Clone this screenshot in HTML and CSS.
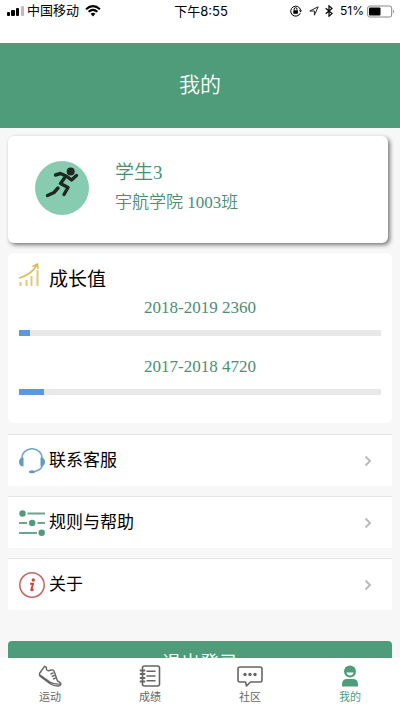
FILE: index.html
```html
<!DOCTYPE html>
<html lang="zh-CN">
<head>
<meta charset="utf-8">
<meta name="viewport" content="width=device-width, initial-scale=1">
<title>我的</title>
<link rel="stylesheet" href="styles.css">
</head>
<body>
<div class="status">
  <div class="status-side">
    <svg class="signal" width="17" height="10" viewBox="0 0 17 10"><rect x="0" y="6" width="3" height="4" rx="1"/><rect x="4" y="4" width="4" height="6" rx="1"/><rect x="9" y="2" width="3" height="8" rx="1"/><rect x="14" y="0" width="3" height="10" rx="1" fill="#bbb"/></svg>
    <span class="carrier">中国移动</span>
    <svg class="wifi" width="16" height="12" viewBox="0 0 16 12"><path d="M1 4.2Q8-2 15 4.2M3.6 6.8Q8 3 12.4 6.8" fill="none" stroke="#000" stroke-width="2"/><path d="M5.6 8.8Q8 6.7 10.4 8.8L8 11.5Z"/></svg>
  </div>
  <span class="time">下午8:55</span>
  <div class="status-side status-right">
    <svg width="12" height="12" viewBox="0 0 12 12"><path d="M10.3 8.2A5 5 0 1 1 10.6 5" fill="none" stroke="#000"/><path d="M9 5.2h3L10.5 7.6Z"/><rect x="3.3" y="5.2" width="4.6" height="3.6" rx=".4"/><path d="M4.2 5.3V4.1a1.4 1.4 0 0 1 2.8 0v1.2" fill="none" stroke="#000"/></svg>
    <svg class="arrow" width="10" height="10" viewBox="0 0 10 10"><path d="M.8 5 9.2.8 5.4 9.2V5Z" fill="none" stroke="#222"/></svg>
    <svg class="bluetooth" width="8" height="12" viewBox="0 0 8 12"><path d="M.7 3.2 7 8.6 4 11.2V.8L7 3.4.7 8.8" fill="none" stroke="#000" stroke-width="1.2"/></svg>
    <span class="percent">51%</span>
    <svg width="28" height="13" viewBox="0 0 28 13"><rect x=".7" y="1" width="24" height="11" rx="2" fill="#fff" stroke="#888"/><rect x="2" y="2.5" width="11.5" height="8" rx="1"/><path d="M26 4.5q2 2 0 4Z" fill="#888"/></svg>
  </div>
</div>
<header class="header"><h1>我的</h1></header>
<main class="content">
  <section class="profile">
    <svg class="avatar" width="54" height="54" viewBox="0 0 54 54"><circle cx="27" cy="27" r="27" fill="#87ccb0"/><circle cx="35.700" cy="10.500" r="4" fill="#202824"/><path d="M20.500 14 25.500 12.500 31 15 25.500 22.500 33 26.500 29 33.500M23 27 19 31.500 12.500 34.500M32 15.500l4.500 3.500 5-4.500" fill="none" stroke="#202824" stroke-width="3.400" stroke-linecap="round" stroke-linejoin="round"/></svg>
    <div class="person">
      <div class="name">学生3</div>
      <div class="class-name">宇航学院 1003班</div>
    </div>
  </section>
  <section class="growth">
    <div class="growth-title">
      <svg width="20" height="24" viewBox="0 0 20 24"><path d="M1.500 23v-4M7.500 23v-6M12.500 23V13M18.500 23V7" fill="none" stroke="#e3c878" stroke-width="2"/><path d="M0 15Q12 12 18 2M13.500 3.500 18.500 1l.500 5" fill="none" stroke="#dfb951" stroke-width="1.500"/></svg>
      <h2>成长值</h2>
    </div>
    <div class="year">
      <div class="year-label" id="y1">2018-2019 2360</div>
      <div class="track" role="progressbar" aria-labelledby="y1" aria-valuenow="3"><div class="fill" style="width:3%"></div></div>
    </div>
    <div class="year">
      <div class="year-label" id="y2">2017-2018 4720</div>
      <div class="track" role="progressbar" aria-labelledby="y2" aria-valuenow="7"><div class="fill" style="width:7%"></div></div>
    </div>
  </section>
  <nav class="links">
    <a class="row" href="#service">
      <svg width="26" height="26" viewBox="0 0 26 26"><path d="M3 11V10a10 9.300 0 0 1 20 0v1M23.500 17q-1 5-8 6.500" fill="none" stroke="#73a9c8" stroke-width="1.500"/><path d="M4.500 9.500v9C1.500 18.500 0 16.500 0 14s1.500-4.500 4.500-4.500ZM21.500 9.500v9c3 0 4.500-2 4.500-4.500s-1.500-4.500-4.500-4.500Z" fill="#5f9cc2"/><ellipse cx="13" cy="23.700" rx="3" ry="1.500" fill="#5f9cc2"/></svg>
      <span>联系客服</span>
      <svg class="chevron" width="8" height="12" viewBox="0 0 8 12"><path d="m1.500 1.500 4.500 4.500-4.500 4.500" /></svg>
    </a>
    <a class="row" href="#help">
      <svg width="26" height="26" viewBox="0 0 26 26"><path d="M8.500 3.500H26M0 13h8M18.500 13H26M0 23h18" stroke="#69a98b" stroke-width="2"/><circle cx="3.500" cy="3.500" r="3.200" fill="#529b79"/><circle cx="13.200" cy="13" r="3.200" fill="#529b79"/><circle cx="22.700" cy="22.700" r="3.200" fill="#529b79"/></svg>
      <span>规则与帮助</span>
      <svg class="chevron" width="8" height="12" viewBox="0 0 8 12"><path d="m1.500 1.500 4.500 4.500-4.500 4.500" /></svg>
    </a>
    <a class="row" href="#about">
      <svg width="26" height="26" viewBox="0 0 26 26"><circle cx="13" cy="13" r="12.200" fill="none" stroke="#c9635f" stroke-width="1.500"/><circle cx="14.300" cy="8" r="1.700" fill="#cf4540"/><path d="M11 11.700h3L12.300 18q0 .800 2.200-.600" fill="none" stroke="#cf4540" stroke-width="2"/></svg>
      <span>关于</span>
      <svg class="chevron" width="8" height="12" viewBox="0 0 8 12"><path d="m1.500 1.500 4.500 4.500-4.500 4.500" /></svg>
    </a>
  </nav>
  <button class="logout" type="button">退出登录</button>
</main>
<nav class="tabs">
  <a class="tab" href="#sport">
    <svg width="24" height="22" viewBox="0 0 24 22"><path d="M6.500 1.300 1.500 8.500Q1 10.500 3 12l9.500 7q3.500 2.200 8 2 2.800-.5 2.300-2.500-.3-1.300-3.300-2.500L16 6Q15.500 4.500 13.500 5l-3 .8Q7.500 5 8.500 2.300ZM2 10l11 7.700q3.500 1.800 9.500 1.300M12.500 9l3-1.200M13.700 11.500l3-1.200M15 14l3-1.200" fill="none" stroke="#666" stroke-width="1.400" stroke-linejoin="round"/></svg>
    <span>运动</span>
  </a>
  <a class="tab" href="#score">
    <svg width="24" height="22" viewBox="0 0 24 22"><rect x="4.500" y="1" width="17" height="20" rx="2" fill="none" stroke="#666" stroke-width="1.600"/><path d="M8.500 6.200h9M8.500 11h9M8.500 15.800h9" stroke="#666" stroke-width="1.400"/><path d="M2.500 5.500h4M2.500 9h4M2.500 13h4M2.500 16.500h4" stroke="#666" stroke-width="1.800" stroke-linecap="round"/></svg>
    <span>成绩</span>
  </a>
  <a class="tab" href="#community">
    <svg width="26" height="22" viewBox="0 0 26 22"><path d="M3 2h20q2 0 2 2v11q0 2-2 2H13.500l-4 4-1-4H3q-2 0-2-2V4q0-2 2-2Z" fill="none" stroke="#666" stroke-width="1.600" stroke-linejoin="round"/><g fill="#666"><circle cx="8" cy="9.500" r="1.700"/><circle cx="13" cy="9.500" r="1.700"/><circle cx="18" cy="9.500" r="1.700"/></g></svg>
    <span>社区</span>
  </a>
  <a class="tab active" href="#me" aria-current="page">
    <svg width="24" height="22" viewBox="0 0 24 22"><circle cx="12" cy="6.500" r="6" fill="#4f9c7a"/><path d="M8.500 7.500h7q-.5 3-3.500 3t-3.500-3Z" fill="#fff"/><path d="M4 21.500v-2Q4 14 9 14h6q5 0 5 5.500v2Z" fill="#4f9c7a"/></svg>
    <span>我的</span>
  </a>
</nav>
</body>
</html>
```
FILE: styles.css
```css
* {
  box-sizing: border-box;
}

body {
  margin: 0;
  height: 100vh;
  display: flex;
  flex-direction: column;
  background: #f7f7f7;
  color: #000;
  font-family: "Liberation Sans", "Noto Sans CJK SC", sans-serif;
}

svg {
  display: block;
  flex: none;
}

a {
  color: inherit;
  text-decoration: none;
}

h1,
h2 {
  margin: 0;
  font-weight: 400;
}

.status {
  flex: none;
  display: flex;
  justify-content: space-between;
  padding: 0 5px 21px 7px;
  background: #fff;
  font-size: 13px;
  line-height: 22px;
}

.status-side {
  flex: 1;
  display: flex;
  align-items: center;
}

.status-right {
  justify-content: flex-end;
}

.carrier {
  margin: 0 6px 0 3px;
}

.time {
  font-family: Inter, "Noto Sans CJK SC", sans-serif;
}

.arrow {
  margin-left: 7px;
}

.bluetooth {
  margin: 0 7px 0 6px;
}

.percent {
  margin-right: 3px;
  font-family: Inter, sans-serif;
  font-size: 12px;
}

.header {
  flex: none;
  padding: 24px 0 25px;
  background: #4f9c7a;
  color: #fff;
  text-align: center;
}

.header h1 {
  font-size: 21px;
  font-weight: 350;
  line-height: 36px;
}

.content {
  flex: 1;
  min-height: 0;
  overflow-y: auto;
  scrollbar-width: none;
  padding: 8px;
}

.profile {
  display: flex;
  align-items: center;
  gap: 26px;
  margin-right: 4px;
  padding: 22px 27px 25px;
  border-radius: 6px;
  background: #fff;
  box-shadow: 2px 2px 4px #777;
  color: #4b8f73;
  font-family: "Liberation Serif", "Noto Sans CJK SC", serif;
  font-weight: 350;
}

.name {
  font-size: 19px;
  line-height: 30px;
}

.class-name {
  font-size: 17px;
  line-height: 30px;
}

.growth {
  margin-top: 10px;
  padding: 10px 11px 28px;
  border-radius: 6px;
  background: #fff;
}

.growth-title {
  display: flex;
  gap: 10px;
}

.growth h2 {
  font-size: 19px;
  line-height: 34px;
}

.year + .year {
  margin-top: 20px;
}

.year-label {
  padding-bottom: 11px;
  color: #4b8f73;
  font-family: "Liberation Serif", serif;
  font-size: 17px;
  line-height: 22px;
  text-align: center;
}

.track {
  height: 6px;
  background: #e8e8e8;
}

.fill {
  height: 100%;
  background: #5899e0;
}

.links {
  display: grid;
  gap: 10px;
  margin-top: 11px;
}

.row {
  display: flex;
  align-items: center;
  gap: 4px;
  padding: 12px 20px 12px 11px;
  border-top: 1px solid #e4e4e4;
  background: #fff;
  font-size: 17px;
  line-height: 27px;
}

.chevron {
  margin-left: auto;
  fill: none;
  stroke: #bbb;
  stroke-width: 2;
}

.logout {
  display: block;
  width: 100%;
  margin-top: 31px;
  padding: 8px 0;
  border: 0;
  border-radius: 4px;
  background: #4f9c7a;
  color: #fff;
  font-family: inherit;
  font-size: 19px;
  font-weight: 350;
  line-height: 30px;
}

.tabs {
  flex: none;
  display: flex;
  padding: 7px 0 5px;
  background: #fff;
}

.tab {
  flex: 1;
  display: flex;
  flex-direction: column;
  align-items: center;
  gap: 2px;
  color: #666;
  font-size: 11px;
  line-height: 16px;
}

.active {
  color: #4f9c7a;
}
```
